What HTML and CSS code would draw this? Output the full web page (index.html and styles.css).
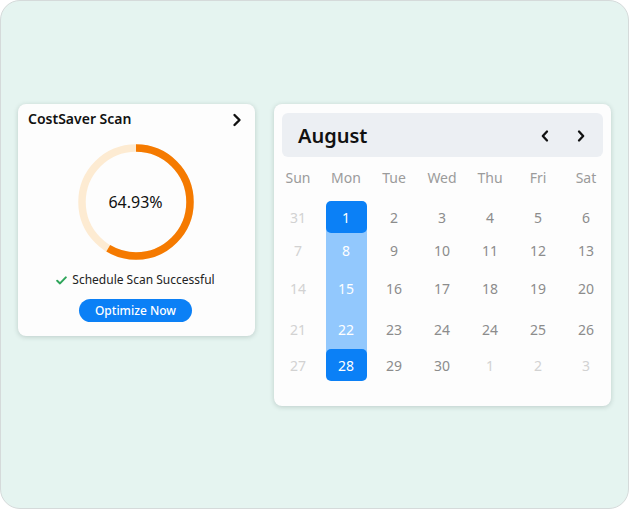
FILE: index.html
```html
<!DOCTYPE html>
<html lang="en">
<head>
    <meta charset="UTF-8">
    <meta name="viewport" content="width=device-width, initial-scale=1.0">
    <title>CostSaver</title>
    <link rel="stylesheet" href="styles.css">
</head>
<body>
    <div class="frame">
        <div class="card scan">
            <div class="scan-head">
                <span class="scan-title">CostSaver Scan</span>
                <svg class="chev" width="12" height="14" viewBox="0 0 12 14">
                    <path d="M3.5 2 L8.5 7 L3.5 12" fill="none" stroke="#111" stroke-width="2.4" stroke-linecap="round" stroke-linejoin="round"/>
                </svg>
            </div>
            <div class="ring">
                <svg width="116" height="116" viewBox="0 0 116 116">
                    <circle cx="58" cy="58" r="54" fill="none" stroke="#fdebd2" stroke-width="7.5"/>
                    <!-- progress arc, starts at 12 o'clock -->
                    <circle cx="58" cy="58" r="54" fill="none" stroke="#f57a00" stroke-width="7.5"
                        stroke-dasharray="198.5 400" transform="rotate(-90 58 58)"/>
                </svg>
                <span class="ring-value">64.93%</span>
            </div>
            <div class="status">
                <svg width="11" height="9" viewBox="0 0 11 9">
                    <path d="M1.2 4.8 L4 7.4 L9.8 1.4" fill="none" stroke="#2ea55a" stroke-width="2" stroke-linecap="round" stroke-linejoin="round"/>
                </svg>
                Schedule Scan Successful
            </div>
            <button class="btn">Optimize Now</button>
        </div>

        <div class="card calendar">
            <div class="cal-head">
                <span class="month">August</span>
                <div class="nav">
                    <svg width="10" height="14" viewBox="0 0 10 14"><path d="M7 2.5 L2.8 7 L7 11.5" fill="none" stroke="#111" stroke-width="2.3" stroke-linecap="round" stroke-linejoin="round"/></svg>
                    <svg width="10" height="14" viewBox="0 0 10 14"><path d="M3 2.5 L7.2 7 L3 11.5" fill="none" stroke="#111" stroke-width="2.3" stroke-linecap="round" stroke-linejoin="round"/></svg>
                </div>
            </div>
            <div class="weekdays">
                <span>Sun</span><span>Mon</span><span>Tue</span><span>Wed</span><span>Thu</span><span>Fri</span><span>Sat</span>
            </div>
            <div class="days">
                <span class="off">31</span><span class="sel first">1</span><span>2</span><span>3</span><span>4</span><span>5</span><span>6</span>
                <span class="off">7</span><span class="range">8</span><span>9</span><span>10</span><span>11</span><span>12</span><span>13</span>
                <span class="off">14</span><span class="range">15</span><span>16</span><span>17</span><span>18</span><span>19</span><span>20</span>
                <span class="off">21</span><span class="range">22</span><span>23</span><span>24</span><span>24</span><span>25</span><span>26</span>
                <span class="off">27</span><span class="sel last">28</span><span>29</span><span>30</span><span class="off">1</span><span class="off">2</span><span class="off">3</span>
            </div>
        </div>
    </div>
</body>
</html>
```

FILE: styles.css
```css
* {
    box-sizing: border-box;
}
body {
    margin: 0;
    font-family: "Noto Sans", "Open Sans", sans-serif;
    background: #ffffff;
}
.frame {
    width: 629px;
    height: 509px;
    border: 1px solid #d5dada;
    border-radius: 20px;
    background: #e5f4f0;
    display: flex;
    align-items: flex-start;
    gap: 19px;
    padding: 103px 17px;
}
.card {
    background: #fdfdfd;
    border-radius: 8px;
    box-shadow: 0 1px 5px rgba(40, 70, 65, 0.22);
}

/* scan card */
.scan {
    width: 237px;
    height: 232px;
    padding: 5px 12px 0 10px;
    display: flex;
    flex-direction: column;
    align-items: center;
}
.scan-head {
    width: 100%;
    display: flex;
    justify-content: space-between;
    align-items: center;
}
.scan-title {
    font-size: 14px;
    font-weight: 600;
    line-height: 20px;
    color: #111;
}
.chev {
    margin-top: 2px;
}
.ring {
    position: relative;
    width: 116px;
    height: 116px;
    margin-top: 15px;
}
.ring svg {
    display: block;
}
.ring-value {
    position: absolute;
    inset: 0;
    display: flex;
    align-items: center;
    justify-content: center;
    font-size: 16px;
    color: #111;
}
.status {
    margin-top: 12px;
    font-size: 12px;
    line-height: 16px;
    color: #222;
    display: flex;
    align-items: center;
    gap: 5px;
}
.btn {
    margin-top: 11px;
    width: 113px;
    height: 23px;
    border: none;
    border-radius: 12px;
    background: #0b80f6;
    color: #fff;
    font-family: inherit;
    font-size: 12px;
    font-weight: 500;
    padding: 0;
}

/* calendar card */
.calendar {
    width: 337px;
    height: 302px;
    padding-top: 9px;
}
.cal-head {
    margin: 0 8px;
    height: 44px;
    background: #eceff3;
    border-radius: 6px;
    display: flex;
    align-items: center;
    justify-content: space-between;
    padding: 0 17px 0 16px;
}
.month {
    font-size: 20px;
    font-weight: 600;
    color: #111;
}
.nav {
    display: flex;
    gap: 26px;
    padding-top: 2px;
}
.weekdays,
.days {
    display: grid;
    grid-template-columns: repeat(7, 48px);
    text-align: center;
}
.weekdays {
    margin-top: 11px;
    font-size: 14px;
    line-height: 20px;
    color: #9b9b9b;
}
.days {
    margin-top: 13px;
    grid-template-rows: 32px 34px 42px 40px 32px;
    font-size: 14px;
    color: #8c8c8c;
}
.days span {
    display: flex;
    align-items: center;
    justify-content: center;
    margin: 0 3.5px;
}
.days .off {
    color: #d2d2d2;
}
.days .range {
    background: #92c8fd;
    color: #fff;
}
.days .sel {
    background: #0b80f6;
    color: #fff;
}
.days .first {
    border-radius: 5px;
    box-shadow: 0 6px 0 0 #92c8fd;
    position: relative;
}
.days .last {
    border-radius: 5px;
    box-shadow: 0 -6px 0 0 #92c8fd;
    position: relative;
}
```
